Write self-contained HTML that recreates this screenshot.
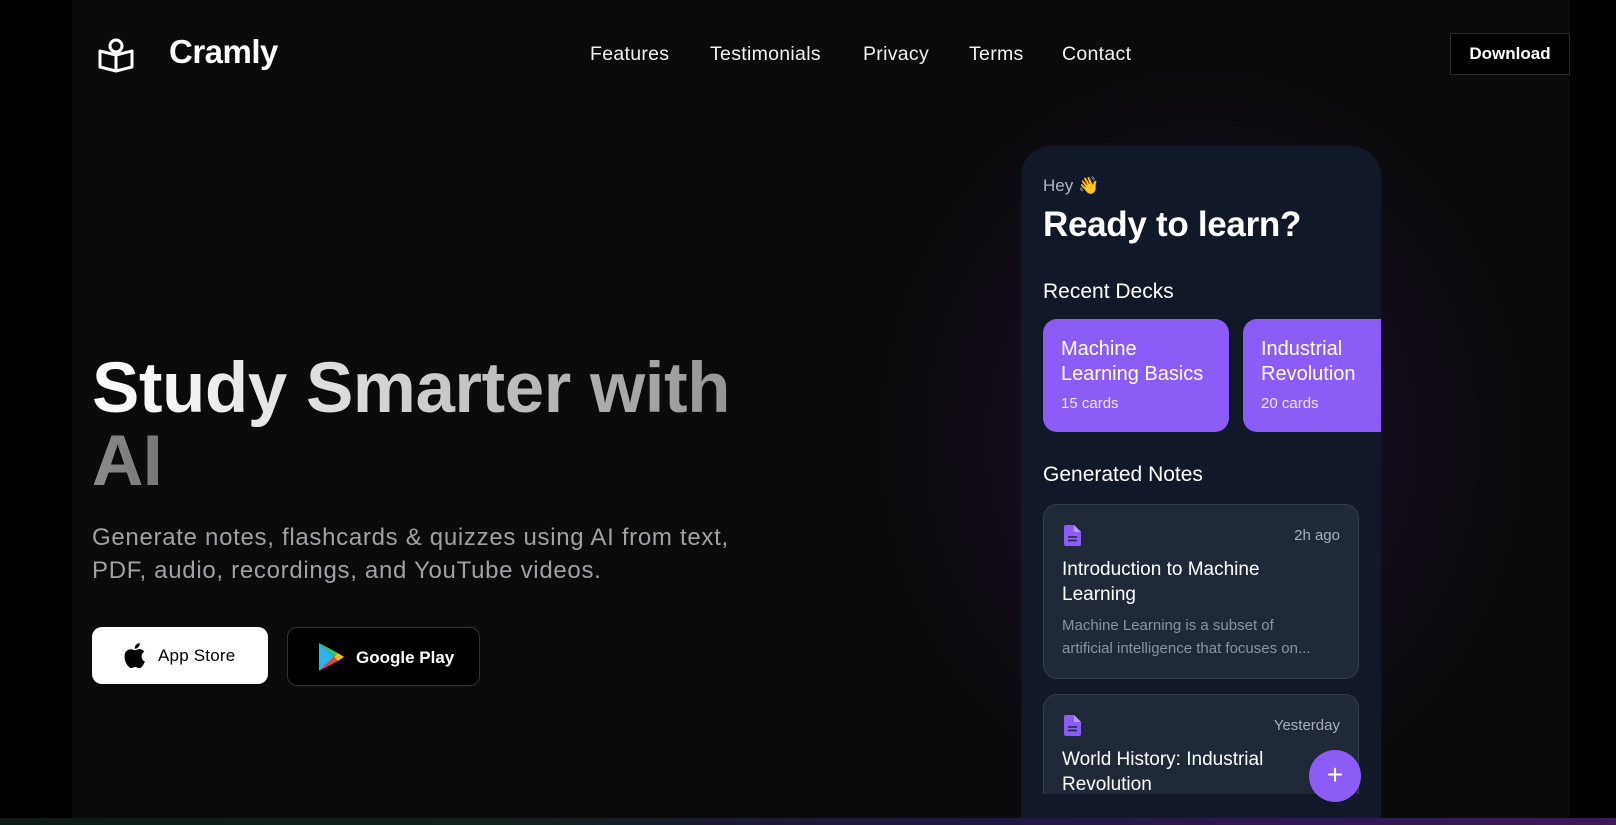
<!DOCTYPE html>
<html><head><meta charset="utf-8">
<style>
*{margin:0;padding:0;box-sizing:border-box}
html,body{width:1616px;height:825px;overflow:hidden;background:#000;font-family:"Liberation Sans","DejaVu Sans",sans-serif;color:#fff}
.wrap{position:absolute;left:72px;top:0;width:1498px;height:825px;background:#0b0b0c;overflow:hidden}
.abs{position:absolute}
.nav a{position:absolute;top:43px;font-size:19.5px;letter-spacing:0.3px;color:#f2f2f2;text-decoration:none}
.glow{position:absolute;left:800px;top:60px;width:660px;height:760px;background:radial-gradient(ellipse at center,rgba(110,40,150,.35) 0%,rgba(60,20,90,.2) 40%,rgba(11,11,12,0) 70%)}
.phone{position:absolute;left:949px;top:146px;width:360px;height:672px;background:#111827;border-radius:30px 30px 0 0;overflow:hidden}
.deck{position:absolute;top:173px;height:113px;background:#8b5cf6;border-radius:14px;padding:18px 18px}
.deck .t{font-size:20px;line-height:25px;color:#fff}
.deck .c{font-size:15px;color:#ece6ff;margin-top:8px}
.note{position:absolute;left:22px;width:316px;background:#1f2937;border:1px solid #333d4c;border-radius:14px}
.note .tm{position:absolute;right:18px;top:22px;font-size:15px;color:#a8afba}
.note .ti{position:absolute;left:18px;top:52px;font-size:19px;line-height:25px;color:#fff}
.note .ds{position:absolute;left:18px;top:109px;font-size:15px;line-height:23px;color:#8a93a0}
.doc{position:absolute;left:20px;top:20px}
</style></head><body>
<div class="wrap">
  <svg class="abs" style="left:25px;top:37px" width="38" height="36" viewBox="0 0 38 36" fill="none" stroke="#fff" stroke-width="3" stroke-linejoin="round">
    <circle cx="19" cy="9" r="6"/>
    <path d="M3 14 L3 30 L19 34 L35 30 L35 14 L19 18 Z M19 18 L19 34"/>
  </svg>
  <div class="abs" style="left:97px;top:33px;font-size:33px;font-weight:bold;letter-spacing:-0.5px">Cramly</div>
  <div class="nav">
    <a style="left:518px">Features</a>
    <a style="left:638px">Testimonials</a>
    <a style="left:791px">Privacy</a>
    <a style="left:897px">Terms</a>
    <a style="left:990px">Contact</a>
  </div>
  <div class="abs" style="left:1378px;top:33px;width:120px;height:42px;background:#000;border:1px solid #2a2a2a;font-size:17px;font-weight:bold;text-align:center;line-height:40px">Download</div>

  <div class="abs" style="left:20px;top:352px;font-size:71px;font-weight:bold;line-height:73px;letter-spacing:-0.5px;width:700px;background:linear-gradient(90deg,#ffffff 0%,#dcdcdc 35%,#8a8a8a 100%);-webkit-background-clip:text;background-clip:text;color:transparent">Study Smarter with<br><span style="background:linear-gradient(90deg,#8a8a8a,#777);-webkit-background-clip:text;background-clip:text;color:transparent">AI</span></div>
  <div class="abs" style="left:20px;top:521px;font-size:24px;letter-spacing:0.7px;line-height:33px;color:#a0a0a6;width:720px">Generate notes, flashcards &amp; quizzes using AI from text,<br>PDF, audio, recordings, and YouTube videos.</div>

  <div class="abs" style="left:20px;top:627px;width:176px;height:57px;background:#fff;border-radius:10px;color:#000">
    <svg class="abs" style="left:30px;top:14px" width="24" height="29" viewBox="0 0 24 29"><path fill="#000" d="M19.6 15.4c0-3.2 2.6-4.7 2.7-4.8-1.5-2.2-3.8-2.500-4.6-2.5-2-.2-3.8 1.2-4.8 1.2-1 0-2.5-1.1-4.1-1.1-2.1 0-4.1 1.2-5.2 3.1-2.2 3.8-.6 9.5 1.6 12.6 1.1 1.5 2.3 3.2 3.9 3.2 1.6-.1 2.2-1 4.1-1s2.4 1 4.1 1c1.7 0 2.8-1.5 3.8-3.1 1.2-1.7 1.7-3.4 1.7-3.5 0 0-3.2-1.3-3.2-5.1zM16.4 6c.9-1 1.5-2.5 1.3-4-1.3.1-2.8.9-3.7 1.9-.8.9-1.5 2.4-1.3 3.8 1.4.1 2.8-.7 3.7-1.7z"/></svg>
    <div class="abs" style="left:66px;top:19px;font-size:17px;letter-spacing:0.2px">App Store</div>
  </div>
  <div class="abs" style="left:215px;top:627px;width:193px;height:59px;background:#000;border:1px solid #333;border-radius:10px">
    <svg class="abs" style="left:29px;top:14px" width="30" height="30" viewBox="0 0 30 30">
      <path d="M2 1 L17 15 L2 29 Z" fill="#2bb3f0"/>
      <path d="M2 1 L21 11 L17 15 Z" fill="#34c36b"/>
      <path d="M2 29 L21 19 L17 15 Z" fill="#e5463a"/>
      <path d="M21 11 L27 15 L21 19 L17 15 Z" fill="#f9bc15"/>
    </svg>
    <div class="abs" style="left:68px;top:20px;font-size:17px;font-weight:bold">Google Play</div>
  </div>

  <div class="glow"></div>
  <div class="phone">
    <div class="abs" style="left:22px;top:30px;font-size:17px;color:#b0b6c0">Hey 👋</div>
    <div class="abs" style="left:22px;top:59px;font-size:35px;font-weight:bold;letter-spacing:-0.3px">Ready to learn?</div>
    <div class="abs" style="left:22px;top:134px;font-size:21px">Recent Decks</div>
    <div class="deck" style="left:22px;width:186px"><div class="t">Machine<br>Learning Basics</div><div class="c">15 cards</div></div>
    <div class="deck" style="left:222px;width:138px;border-radius:14px 0 0 14px"><div class="t">Industrial<br>Revolution</div><div class="c">20 cards</div></div>
    <div class="abs" style="left:22px;top:317px;font-size:21px">Generated Notes</div>
    <div class="note" style="top:358px;height:175px">
      <svg class="doc" width="17" height="21" viewBox="0 0 17 21"><path d="M0 2a2 2 0 0 1 2-2h8l7 7v12a2 2 0 0 1-2 2H2a2 2 0 0 1-2-2z" fill="#8b5cf6"/><path d="M10 0v7h7" fill="#b79bfb"/><path d="M4 12h9M4 15.5h9" stroke="#1f2937" stroke-width="1.6"/></svg>
      <div class="tm">2h ago</div>
      <div class="ti">Introduction to Machine<br>Learning</div>
      <div class="ds">Machine Learning is a subset of<br>artificial intelligence that focuses on...</div>
    </div>
    <div class="note" style="top:548px;border-bottom:none;border-radius:14px 14px 0 0;height:100px;overflow:hidden">
      <svg class="doc" width="17" height="21" viewBox="0 0 17 21"><path d="M0 2a2 2 0 0 1 2-2h8l7 7v12a2 2 0 0 1-2 2H2a2 2 0 0 1-2-2z" fill="#8b5cf6"/><path d="M10 0v7h7" fill="#b79bfb"/><path d="M4 12h9M4 15.5h9" stroke="#1f2937" stroke-width="1.6"/></svg>
      <div class="tm">Yesterday</div>
      <div class="ti">World History: Industrial<br>Revolution</div>
    </div>
    <div class="abs" style="left:288px;top:604px;width:52px;height:52px;border-radius:50%;background:#8b5cf6;color:#fff;font-size:28px;text-align:center;line-height:50px">+</div>
  </div>
</div>
<div class="abs" style="left:0;top:818px;width:1616px;height:7px;background:linear-gradient(90deg,#0e1a16 0%,#14201c 30%,#1f1840 60%,#3a1a5a 100%)"></div>
</body></html>
